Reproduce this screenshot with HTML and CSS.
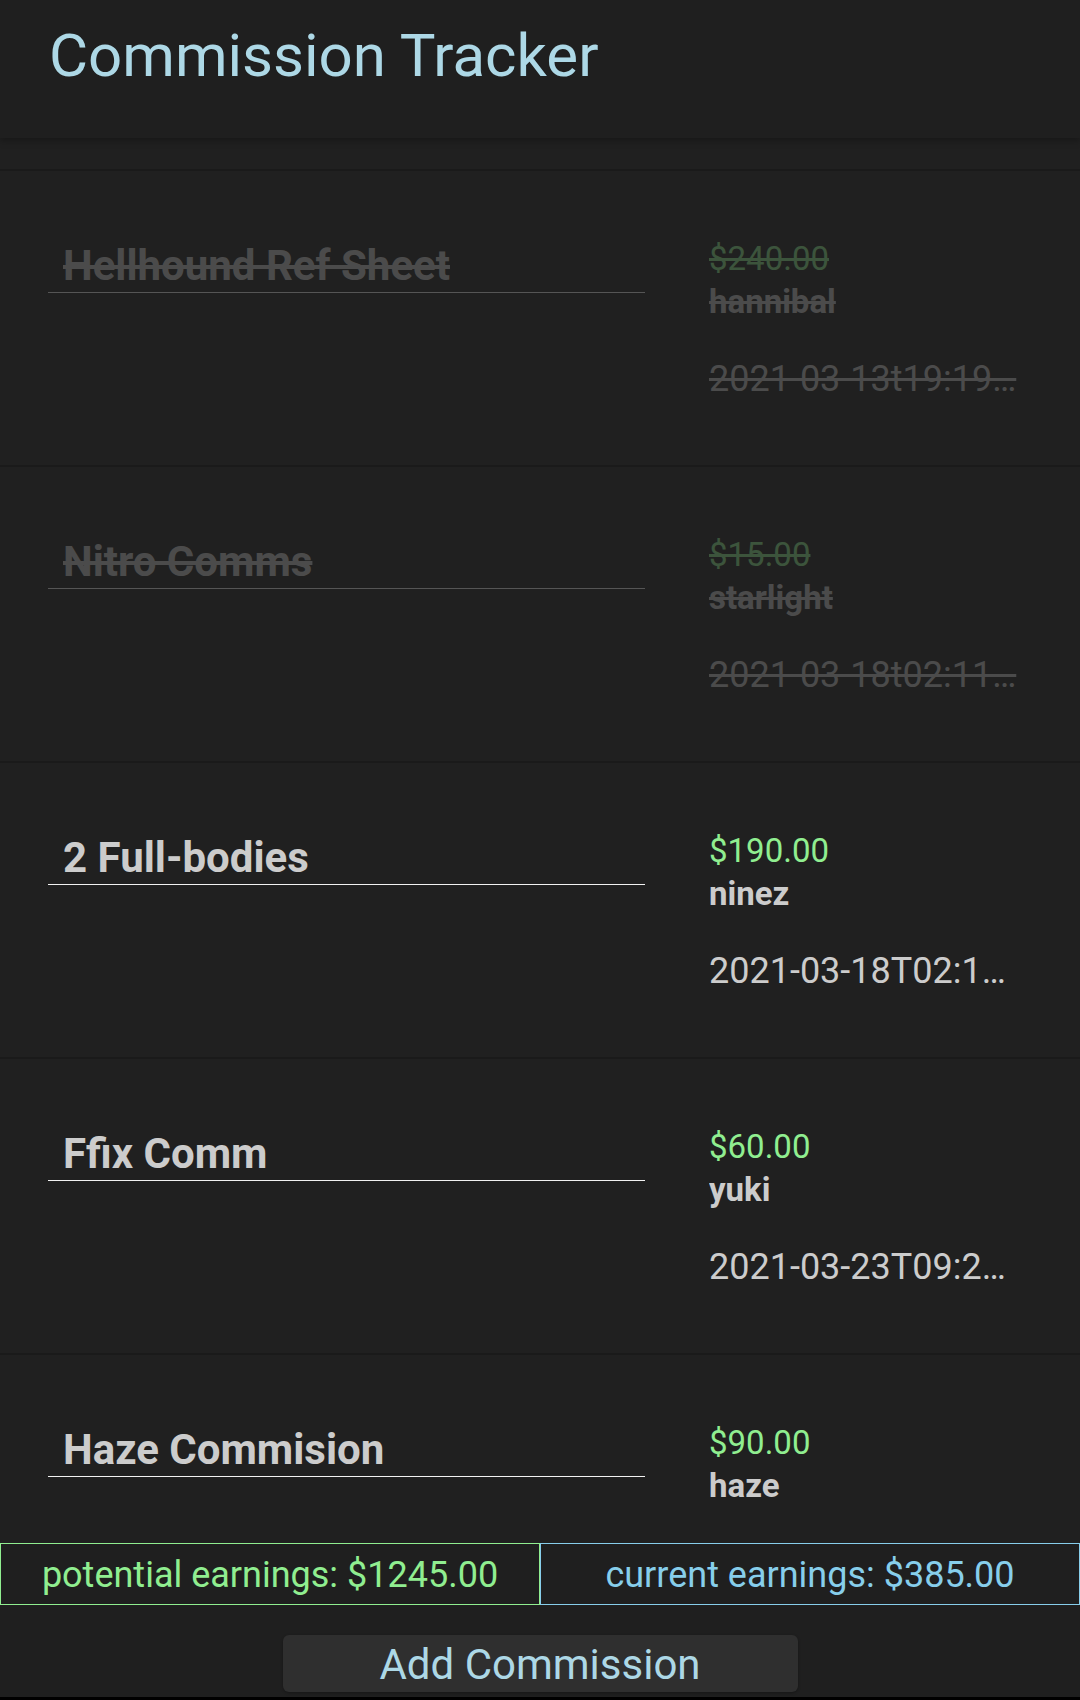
FILE: index.html
```html
<!DOCTYPE html>
<html lang="en">
<head>
<meta charset="utf-8">
<title>Commission Tracker</title>
<link rel="stylesheet" href="styles.css">
</head>
<body>
<div class="app">
  <header class="topbar">
    <h1 class="app-title">Commission Tracker</h1>
  </header>
  <main class="list">
    <div class="card card-stub"></div>
    <div class="card done">
      <div class="left"><div class="title">Hellhound Ref Sheet</div></div>
      <div class="right">
        <div class="price">$240.00</div>
        <div class="client">hannibal</div>
        <div class="date">2021-03-13t19:19…</div>
      </div>
    </div>
    <div class="card done">
      <div class="left"><div class="title">Nitro Comms</div></div>
      <div class="right">
        <div class="price">$15.00</div>
        <div class="client">starlight</div>
        <div class="date">2021-03-18t02:11…</div>
      </div>
    </div>
    <div class="card">
      <div class="left"><div class="title">2 Full-bodies</div></div>
      <div class="right">
        <div class="price">$190.00</div>
        <div class="client">ninez</div>
        <div class="date">2021-03-18T02:1…</div>
      </div>
    </div>
    <div class="card">
      <div class="left"><div class="title">Ffix Comm</div></div>
      <div class="right">
        <div class="price">$60.00</div>
        <div class="client">yuki</div>
        <div class="date">2021-03-23T09:2…</div>
      </div>
    </div>
    <div class="card">
      <div class="left"><div class="title">Haze Commision</div></div>
      <div class="right">
        <div class="price">$90.00</div>
        <div class="client">haze</div>
      </div>
    </div>
  </main>
  <footer class="footer">
    <div class="earnings">
      <div class="earn potential">potential earnings: $1245.00</div>
      <div class="earn current">current earnings: $385.00</div>
    </div>
    <div class="actions">
      <button class="add-btn">Add Commission</button>
    </div>
    <div class="navedge"></div>
  </footer>
</div>
</body>
</html>
```

FILE: styles.css
```css
* { box-sizing: border-box; }

html, body {
  margin: 0;
  padding: 0;
  background: #1f1f1f;
  font-family: Roboto, "Noto Sans", "Liberation Sans", sans-serif;
}

.app {
  width: 1080px;
  height: 1700px;
  display: flex;
  flex-direction: column;
  background: #1f1f1f;
}

.topbar {
  position: relative;
  z-index: 2;
  height: 138px;
  flex: 0 0 138px;
  background: #1f1f1f;
  padding: 26px 0 0 49px;
  box-shadow: 0 3px 7px rgba(0, 0, 0, 0.28);
}

.app-title {
  margin: 0;
  font-size: 60px;
  line-height: 60px;
  font-weight: 400;
  color: #add8e6;
}

.list {
  flex: 1 1 auto;
  min-height: 0;
  overflow: hidden;
  display: flex;
  flex-direction: column;
}

.card {
  flex: 0 0 auto;
  height: 296px;
  background: #202020;
  border-bottom: 2px solid #1a1a1a;
  display: flex;
  padding-left: 48px;
}

.card-stub {
  height: 33px;
}

.left {
  width: 597px;
  flex: 0 0 597px;
  padding-top: 71px;
}

.title {
  font-size: 42px;
  line-height: 48px;
  font-weight: 700;
  color: #cccccc;
  padding: 0 0 2px 15px;
  border-bottom: 1px solid #f2f2f2;
}

.right {
  margin-left: 64px;
  width: 310px;
  padding-top: 66px;
  white-space: nowrap;
  overflow: hidden;
}

.price {
  font-size: 33px;
  line-height: 43px;
  color: #90ee90;
}

.client {
  font-size: 33px;
  line-height: 43px;
  font-weight: 700;
  color: #cccccc;
}

.date {
  margin-top: 35px;
  font-size: 36px;
  line-height: 43px;
  color: #cccccc;
}

.done .left,
.done .right {
  opacity: 0.25;
}

.done .title,
.done .price,
.done .client,
.done .date {
  text-decoration: line-through;
}

.footer {
  flex: 0 0 157px;
  background: #1f1f1f;
  display: flex;
  flex-direction: column;
}

.earnings {
  display: flex;
  height: 62px;
}

.earn {
  flex: 1 1 0;
  text-align: center;
  font-size: 36px;
  line-height: 56px;
  padding-top: 3px;
}

.potential {
  color: #90ee90;
  border: 1px solid #90ee90;
}

.current {
  color: #87ceeb;
  border: 1px solid #87ceeb;
}

.actions {
  display: flex;
  justify-content: center;
  padding-top: 30px;
  height: 92px;
}

.add-btn {
  width: 515px;
  height: 57px;
  border: none;
  border-radius: 6px;
  background: #2f2f2f;
  color: #add8e6;
  font-family: Roboto, "Noto Sans", "Liberation Sans", sans-serif;
  font-size: 42px;
  line-height: 57px;
  padding: 1px 0 0 0;
  box-shadow: 0 1px 3px rgba(0, 0, 0, 0.3);
}

.navedge {
  height: 3px;
  background: #000;
}
```
